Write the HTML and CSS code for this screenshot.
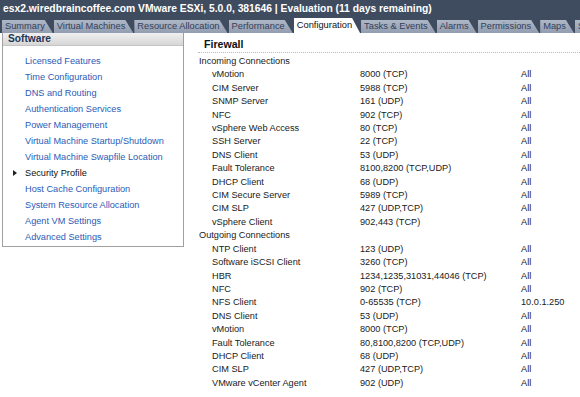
FILE: index.html
```html
<!DOCTYPE html>
<html lang="en">
  <head>
    <meta charset="UTF-8" />
    <title>Configuration</title>
    <link rel="stylesheet" href="styles.css">
  </head>
  <body>
    <div class="titlebar">esx2.wiredbraincoffee.com VMware ESXi, 5.0.0, 381646 | Evaluation (11 days remaining)</div>
    <div class="tabs">
      <div class="tab">Summary</div>
      <div class="tab">Virtual Machines</div>
      <div class="tab">Resource Allocation</div>
      <div class="tab">Performance</div>
      <div class="tab active">Configuration</div>
      <div class="tab">Tasks &amp; Events</div>
      <div class="tab">Alarms</div>
      <div class="tab">Permissions</div>
      <div class="tab">Maps</div>
      <div class="tab">Storage Views</div>
    </div>

    <div class="content">
      <div class="side">
        <div class="side-head">Software</div>
        <ul class="side-list">
          <li><a>Licensed Features</a></li>
          <li><a>Time Configuration</a></li>
          <li><a>DNS and Routing</a></li>
          <li><a>Authentication Services</a></li>
          <li><a>Power Management</a></li>
          <li><a>Virtual Machine Startup/Shutdown</a></li>
          <li><a>Virtual Machine Swapfile Location</a></li>
          <li class="current"><a>Security Profile</a></li>
          <li><a>Host Cache Configuration</a></li>
          <li><a>System Resource Allocation</a></li>
          <li><a>Agent VM Settings</a></li>
          <li><a>Advanced Settings</a></li>
        </ul>
      </div>

      <div class="main">
        <div class="main-title">Firewall</div>
        <div class="fw">
          <div class="group">Incoming Connections</div>
          <div class="name">vMotion</div><div>8000 (TCP)</div><div>All</div>
          <div class="name">CIM Server</div><div>5988 (TCP)</div><div>All</div>
          <div class="name">SNMP Server</div><div>161 (UDP)</div><div>All</div>
          <div class="name">NFC</div><div>902 (TCP)</div><div>All</div>
          <div class="name">vSphere Web Access</div><div>80 (TCP)</div><div>All</div>
          <div class="name">SSH Server</div><div>22 (TCP)</div><div>All</div>
          <div class="name">DNS Client</div><div>53 (UDP)</div><div>All</div>
          <div class="name">Fault Tolerance</div><div>8100,8200 (TCP,UDP)</div><div>All</div>
          <div class="name">DHCP Client</div><div>68 (UDP)</div><div>All</div>
          <div class="name">CIM Secure Server</div><div>5989 (TCP)</div><div>All</div>
          <div class="name">CIM SLP</div><div>427 (UDP,TCP)</div><div>All</div>
          <div class="name">vSphere Client</div><div>902,443 (TCP)</div><div>All</div>
          <div class="group">Outgoing Connections</div>
          <div class="name">NTP Client</div><div>123 (UDP)</div><div>All</div>
          <div class="name">Software iSCSI Client</div><div>3260 (TCP)</div><div>All</div>
          <div class="name">HBR</div><div>1234,1235,31031,44046 (TCP)</div><div>All</div>
          <div class="name">NFC</div><div>902 (TCP)</div><div>All</div>
          <div class="name">NFS Client</div><div>0-65535 (TCP)</div><div>10.0.1.250</div>
          <div class="name">DNS Client</div><div>53 (UDP)</div><div>All</div>
          <div class="name">vMotion</div><div>8000 (TCP)</div><div>All</div>
          <div class="name">Fault Tolerance</div><div>80,8100,8200 (TCP,UDP)</div><div>All</div>
          <div class="name">DHCP Client</div><div>68 (UDP)</div><div>All</div>
          <div class="name">CIM SLP</div><div>427 (UDP,TCP)</div><div>All</div>
          <div class="name">VMware vCenter Agent</div><div>902 (UDP)</div><div>All</div>
        </div>
      </div>
    </div>
  </body>
</html>
```

FILE: styles.css
```css
body {
  margin: 0;
  font-family: "Liberation Sans", Arial, sans-serif;
  font-size: 9.2px;
  color: #1a1a1a;
  background: #fff;
  overflow: hidden;
}

.titlebar {
  height: 18px;
  line-height: 17px;
  padding-left: 3px;
  background: #3f4c60;
  color: #fff;
  font-weight: bold;
  font-size: 10.3px;
  white-space: nowrap;
}

.tabs {
  display: flex;
  height: 15px;
  padding: 0 0 0 2px;
  background: #3f4c60;
  align-items: flex-end;
  overflow: hidden;
  white-space: nowrap;
}
.tab {
  flex: none;
  height: 13px;
  line-height: 13px;
  padding: 0 8px 0 3px;
  margin-right: 1px;
  font-size: 9.3px;
  background: linear-gradient(#aeb7c6, #929db0);
  color: #33405a;
  clip-path: polygon(0 0, calc(100% - 8px) 0, 100% 100%, 0 100%);
}
.tab.active {
  background: #fff;
  color: #111;
  height: 15px;
  line-height: 15px;
}

.content {
  display: flex;
  align-items: flex-start;
}

.side {
  width: 180px;
  margin-left: 2px;
  border: 1px solid #a0a0a0;
  border-top: none;
}
.side-head {
  height: 12px;
  line-height: 11px;
  padding-left: 5px;
  background: linear-gradient(#f0f0f0, #d6d6d6);
  border-bottom: 1px solid #c4c4c4;
  color: #1f3555;
  font-weight: bold;
  font-size: 10.2px;
}
.side-list {
  list-style: none;
  margin: 0;
  padding: 7px 0 1px 22px;
}
.side-list li {
  height: 16px;
  line-height: 16px;
  position: relative;
}
.side-list a {
  color: #2b5bb8;
}
.side-list .current a {
  color: #111;
}
.side-list .current::before {
  content: "";
  position: absolute;
  left: -12px;
  top: 5px;
  border-left: 4px solid #222;
  border-top: 3px solid transparent;
  border-bottom: 3px solid transparent;
}

.main {
  flex: 1;
  padding-left: 14px;
}
.main-title {
  height: 19px;
  line-height: 22px;
  padding-left: 6px;
  font-weight: bold;
  font-size: 10.6px;
  color: #111;
  border-bottom: 1px dotted #bbb;
}

.fw {
  display: grid;
  grid-template-columns: 161px 161px auto;
  grid-auto-rows: 13.42px;
  line-height: 13.4px;
  padding: 2px 0 0 1px;
  white-space: nowrap;
}
.fw .group {
  grid-column: 1 / 4;
}
.fw .name {
  padding-left: 13px;
}
```
